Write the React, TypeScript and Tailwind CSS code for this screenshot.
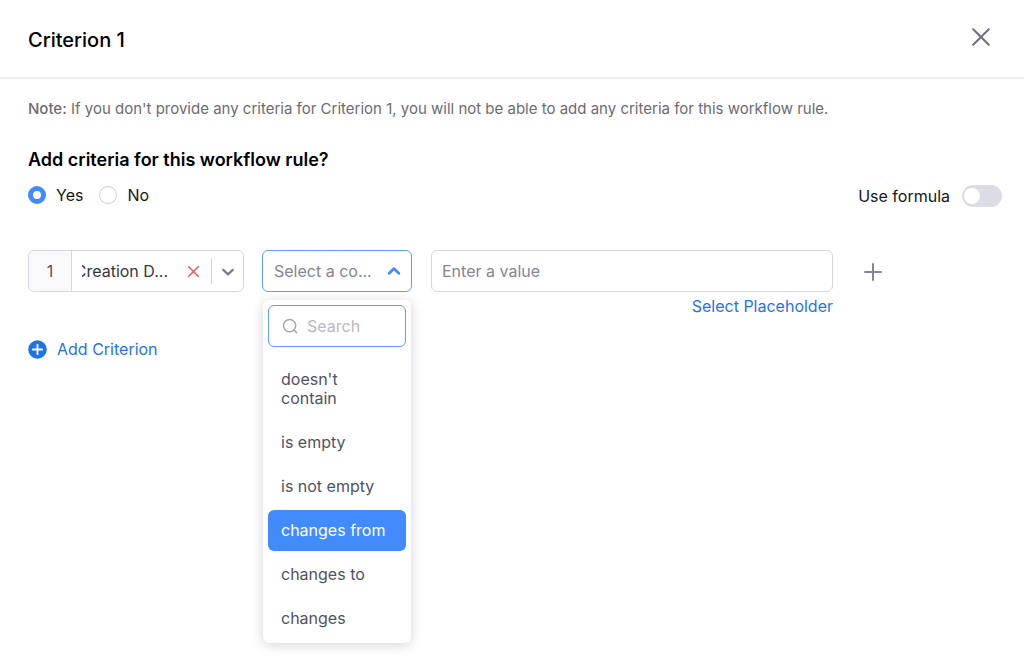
import { useState } from 'react';
import clsx from 'clsx';

const COMPARATORS = ["doesn't contain", 'is empty', 'is not empty', 'changes from', 'changes to', 'changes'];

function CloseIcon({ className }: { className?: string }) {
  return (
    <svg className={className} viewBox="0 0 18 18" fill="none" stroke="currentColor" strokeWidth="2" strokeLinecap="round">
      <path d="M1.2 1.2l15.6 15.6M16.8 1.2L1.2 16.8" />
    </svg>
  );
}

function ChevronIcon({ className }: { className?: string }) {
  return (
    <svg className={className} viewBox="0 0 14 14" fill="none" stroke="currentColor" strokeLinecap="round" strokeLinejoin="round">
      <path d="M2.2 4.8L7 9.4l4.8-4.6" />
    </svg>
  );
}

function RadioOption({ label, checked, onSelect }: { label: string; checked: boolean; onSelect: () => void }) {
  return (
    <label className="flex items-center gap-2.5">
      <input
        type="radio"
        name="add-criteria"
        checked={checked}
        onChange={onSelect}
        className="size-[18px] appearance-none rounded-full border border-[#cfcfda] bg-white checked:border-[5px] checked:border-[#428bfc]"
      />
      {label}
    </label>
  );
}

function FieldPicker() {
  return (
    <div className="flex h-[42px] w-[216px] shrink-0 items-center rounded-md border border-[#d6d6e2] bg-white">
      <span className="flex h-full w-[43px] shrink-0 items-center justify-center rounded-l-md border-r border-[#d6d6e2] bg-[#f9f9fb] text-[#4f5264]">
        1
      </span>
      {/* long names stay anchored to their end */}
      <button type="button" aria-haspopup="listbox" className="ml-2.5 flex w-[86px] justify-end overflow-hidden whitespace-nowrap text-[#35363f]">
        Creation D...
      </button>
      <button type="button" aria-label="Clear field" className="ml-5 text-[#ee5a63]">
        <CloseIcon className="size-[11px] stroke-[2.6]" />
      </button>
      <span className="ml-3 h-[26px] w-px bg-[#d6d6e2]" />
      <button type="button" aria-label="Choose field" className="flex flex-1 justify-center pt-0.5 text-[#777888]">
        <ChevronIcon className="size-[14px] stroke-[2.2]" />
      </button>
    </div>
  );
}

function ComparatorPicker() {
  const [open, setOpen] = useState(true);
  const [active, setActive] = useState('changes from');

  return (
    <div className="relative w-[150px] shrink-0">
      <button
        type="button"
        aria-haspopup="listbox"
        aria-expanded={open}
        onClick={() => setOpen(!open)}
        className="flex h-[42px] w-full items-center justify-between rounded-md border border-[#5f9df8] bg-white pr-2.5 pl-[11px] text-[#858594]"
      >
        Select a co...
        <ChevronIcon className="size-[14px] rotate-180 stroke-[2.8] text-[#428bfc]" />
      </button>

      {open && (
        <div className="absolute inset-x-px top-[50px] rounded-md bg-white px-[5px] pt-[5px] pb-1 shadow-[0_2px_12px_rgba(60,60,110,0.22)]">
          <label className="flex h-[42px] items-center gap-[9px] rounded-md border border-[#5f9df8] pl-[13px]">
            <svg className="size-4 shrink-0 text-[#a6a6b0]" viewBox="0 0 16 16" fill="none" stroke="currentColor" strokeWidth="1.5" strokeLinecap="round">
              <circle cx="7.6" cy="7.6" r="6.1" />
              <path d="M12 12l2.6 2.6" />
            </svg>
            <input
              type="text"
              aria-label="Search"
              placeholder="Search"
              className="w-full min-w-0 bg-transparent outline-none placeholder:text-[#b9b9c1]"
            />
          </label>
          <ul role="listbox" aria-label="Comparator" className="mt-3 flex flex-col gap-[3px]">
            {COMPARATORS.map((name) => (
              <li
                key={name}
                role="option"
                aria-selected={name === active}
                onClick={() => setActive(name)}
                className={clsx(
                  'rounded-md py-[11px] pr-[18px] pl-[13px] leading-[19px]',
                  name === active ? 'bg-[#428bfc] text-white' : 'text-[#4f5264]'
                )}
              >
                {name}
              </li>
            ))}
          </ul>
        </div>
      )}
    </div>
  );
}

export default function App() {
  const [addCriteria, setAddCriteria] = useState(true);
  const [useFormula, setUseFormula] = useState(false);

  return (
    <div className="min-h-screen bg-white font-['Inter',sans-serif] text-base text-[#15161b]">
      <header className="flex h-[79px] items-start justify-between border-b-2 border-[#ececf2] pt-[26px] pr-[34px] pl-7">
        <h1 className="text-xl leading-7 font-medium text-black">Criterion 1</h1>
        <button type="button" aria-label="Close" className="mt-0.5 text-[#6c7086]">
          <CloseIcon className="size-[18px]" />
        </button>
      </header>

      <main className="pt-[18px] pl-7">
        <p className="text-[15px] leading-6 text-[#6b6b72]">
          <span className="font-medium">Note:</span> If you don't provide any criteria for Criterion 1, you will not be able to add any
          criteria for this workflow rule.
        </p>

        <h2 className="mt-[25px] text-lg leading-7 font-semibold text-black">Add criteria for this workflow rule?</h2>

        <div className="mt-2 flex items-center justify-between pr-[22px]">
          <div className="flex items-center gap-4">
            <RadioOption label="Yes" checked={addCriteria} onSelect={() => setAddCriteria(true)} />
            <RadioOption label="No" checked={!addCriteria} onSelect={() => setAddCriteria(false)} />
          </div>
          <label className="flex items-center gap-3 pt-0.5">
            Use formula
            <input
              type="checkbox"
              role="switch"
              checked={useFormula}
              onChange={(e) => setUseFormula(e.target.checked)}
              className="flex h-[22px] w-10 appearance-none items-center rounded-full bg-[#dcdce4] px-0.5 before:size-4 before:rounded-full before:bg-white checked:justify-end checked:bg-[#428bfc]"
            />
          </label>
        </div>

        <div className="mt-[42px] flex items-start pr-[142px]">
          <FieldPicker />
          <div className="ml-[18px]">
            <ComparatorPicker />
          </div>
          <div className="ml-[19px] flex flex-1 flex-col items-end">
            <input
              type="text"
              aria-label="Value"
              placeholder="Enter a value"
              className="h-[42px] w-full rounded-md border border-[#d6d6e2] px-2.5 outline-none placeholder:text-[#858594]"
            />
            <a href="#placeholder" className="mt-0.5 text-[#1f73e8]">
              Select Placeholder
            </a>
          </div>
          <button type="button" aria-label="Add row" className="ml-[31px] flex h-11 items-center text-[#858594]">
            <svg className="size-[18px]" viewBox="0 0 18 18" fill="none" stroke="currentColor" strokeWidth="2" strokeLinecap="round">
              <path d="M9 1v16M1 9h16" />
            </svg>
          </button>
        </div>

        <button type="button" className="mt-[19px] flex items-center gap-2.5 text-[#1f73e8]">
          <svg className="size-[19px]" viewBox="0 0 19 19">
            <circle cx="9.5" cy="9.5" r="9.3" fill="currentColor" />
            <path d="M9.5 4.8v9.4M4.8 9.5h9.4" fill="none" stroke="white" strokeWidth="1.8" strokeLinecap="round" />
          </svg>
          Add Criterion
        </button>
      </main>
    </div>
  );
}
